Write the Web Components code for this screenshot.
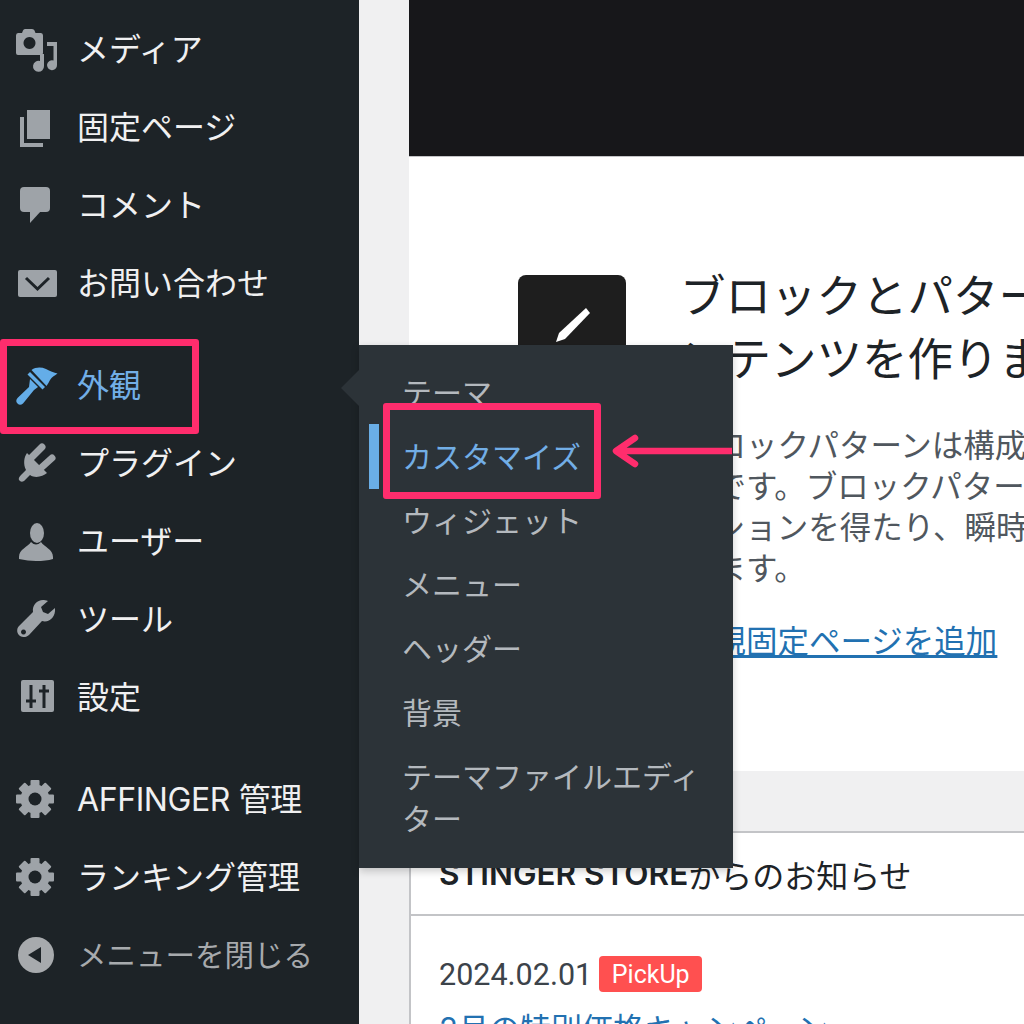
<!DOCTYPE html>
<html lang="ja">
<head>
<meta charset="utf-8">
<title>外観 カスタマイズ</title>
<style>
html, body { margin: 0; height: 1024px; overflow: hidden; }
body {
    display: flex;
    position: relative;
    background: #f0f0f1;
    font-family: Inter, "Noto Sans CJK JP", sans-serif;
    color: #3c434a;
}
</style>
</head>
<body>
<admin-sidebar>
    <menu-item icon="media">メディア</menu-item>
    <menu-item icon="pages">固定ページ</menu-item>
    <menu-item icon="comment">コメント</menu-item>
    <menu-item icon="mail">お問い合わせ</menu-item>
    <menu-gap></menu-gap>
    <menu-item icon="brush" active>外観</menu-item>
    <menu-item icon="plug">プラグイン</menu-item>
    <menu-item icon="user">ユーザー</menu-item>
    <menu-item icon="wrench">ツール</menu-item>
    <menu-item icon="sliders">設定</menu-item>
    <menu-gap></menu-gap>
    <menu-item icon="gear" style="letter-spacing:-.4px">AFFINGER 管理</menu-item>
    <menu-item icon="gear">ランキング管理</menu-item>
    <menu-item icon="collapse" dim>メニューを閉じる</menu-item>
</admin-sidebar>

<main-area>
    <video-banner></video-banner>
    <welcome-panel></welcome-panel>
    <news-box></news-box>
</main-area>

<fly-menu>
    <fly-item>テーマ</fly-item>
    <fly-item current>カスタマイズ</fly-item>
    <fly-item>ウィジェット</fly-item>
    <fly-item>メニュー</fly-item>
    <fly-item>ヘッダー</fly-item>
    <fly-item>背景</fly-item>
    <fly-item>テーマファイルエディター</fly-item>
</fly-menu>

<mark-box style="left:0;top:339px;width:199px;height:95px"></mark-box>
<mark-box style="left:383px;top:403px;width:218px;height:96px"></mark-box>
<mark-arrow></mark-arrow>

<script>
// dashicon look-alikes, drawn in a 40x40 box
var BG = "#1d2327";
var ICONS = {
    media: `<path fill-rule="evenodd" d="M0 6.5Q0 4 2 4H6L7 1.5Q7.500 0 9 0H16Q18 0 18.500 1.500L19.500 4H25Q27 4 27 6.500V24Q27 26 25 26H2Q0 26 0 24ZM13.500 8A6 6 0 1 0 13.501 8Z"/>
            <path d="M31 13H41V36A5 5 0 1 1 37.500 31.500V17H31Z"/><path d="M24 25H28V37A5.500 5.500 0 1 1 24 32Z"/>`,
    pages: `<path d="M11 3H34V32H11Z"/><path d="M4 10H8V36H27V40H4Z"/>`,
    comment: `<rect x="4" y="2" width="30" height="25" rx="4"/><path d="M14 26V38L25 26Z"/>`,
    mail: `<rect x="2" y="7" width="39" height="27" rx="2"/><path d="M10 15L21.500 26L33 15" fill="none" stroke="${BG}" stroke-width="3"/>`,
    brush: `<path d="M15.500 5C20 2 25 2 30 4C34 6 38 8 41.500 8.500C38 11 36 12 34 15C33 17 32 19 30.500 21Z"/>
            <path d="M11.500 9.500L14 7L29 22L26.500 24.500Z"/>
            <path d="M14 14L22 22L18 25L7 38.500Q4 41 1.500 38.500Q-1 36 1.500 33L13 22Z"/>`,
    plug: `<path d="M11 10L31 30C27 33 20 36 14 32L8 38Q5 40 3 37Q2 35 5 32L10 27C7 21 8 14 11 10Z"/>
           <path d="M16 14L26 4M26 24L36 15" stroke="currentColor" stroke-width="7" stroke-linecap="round"/>`,
    user: `<ellipse cx="21" cy="12" rx="7" ry="10"/><path d="M15 21C12 26 3 28 3 36V38Q12 40 20 40Q30 40 37 38V36C37 28 28 26 25 21Q20 26 15 21Z"/>`,
    wrench: `<path fill-rule="evenodd" d="M27 1C21 1 16 6 17 13L3 27C0 30 1 35 4 37C7 39 11 38 13 36L26 22C33 24 40 18 39 9L32 15L27 13L25 8L32 2C30 1 28 1 27 1ZM7.500 30.500A2.500 2.500 0 1 0 7.501 30.500Z"/>`,
    sliders: `<rect x="5" y="3" width="33" height="32" rx="2"/>
              <path d="M15 8V31M10 24H20M28 8V31M23 14H33" fill="none" stroke="${BG}" stroke-width="3"/>`,
    gear: `<g transform="translate(19 20)"><circle r="14.500"/>
           <rect x="-4.500" y="-19" width="9" height="38" rx="1"/>
           <rect x="-4.500" y="-19" width="9" height="38" rx="1" transform="rotate(45)"/>
           <rect x="-4.500" y="-19" width="9" height="38" rx="1" transform="rotate(90)"/>
           <rect x="-4.500" y="-19" width="9" height="38" rx="1" transform="rotate(135)"/>
           <circle r="6.500" fill="${BG}"/></g>`,
    collapse: `<circle cx="20" cy="20" r="18"/><path d="M12 20L25 12V28Z" fill="${BG}"/>`
};

class AdminSidebar extends HTMLElement {
    constructor(){
        super();
        this.attachShadow({mode:"open"});
        this.shadowRoot.innerHTML = `
        <style>
        :host{
            display: flex;
            flex-direction: column;
            flex: none;
            width: 359px;
            height: 1024px;
            box-sizing: border-box;
            padding-top: 10px;
            background: ${BG};
        }
        </style>
        <slot></slot>`;
    }
}

class MenuItem extends HTMLElement {
    constructor(){
        super();
        this.attachShadow({mode:"open"});
    }
    connectedCallback(){
        this.shadowRoot.innerHTML = `
        <style>
        :host{
            display: flex;
            align-items: center;
            gap: 21px;
            height: 78px;
            padding-left: 16px;
            font-size: 32px;
            color: #f0f0f1;
            white-space: nowrap;
        }
        :host([active]){ color: #72aee6; }
        :host([dim]){ color: #a7aaad; font-size: 29.500px; }
        span{ margin-bottom: 4px; }
        svg{ flex: none; width: 40px; height: 40px; overflow: visible; color: #9ea3a8; fill: currentColor; }
        :host([active]) svg{ color: #64ade8; }
        :host([dim]) svg{ color: #a7aaad; }
        </style>
        <svg viewBox="0 0 40 40">${ICONS[this.getAttribute("icon")]}</svg>
        <span><slot></slot></span>`;
    }
}

class MenuGap extends HTMLElement {
    constructor(){
        super();
        this.attachShadow({mode:"open"});
        this.shadowRoot.innerHTML = `<style>:host{ display:block; height:24px; }</style>`;
    }
}

class MainArea extends HTMLElement {
    constructor(){
        super();
        this.attachShadow({mode:"open"});
        this.shadowRoot.innerHTML = `
        <style>
        :host{
            display: flex;
            flex-direction: column;
            flex: 1;
            min-width: 0;
            padding-left: 50px;
        }
        </style>
        <slot></slot>`;
    }
}

class VideoBanner extends HTMLElement {
    constructor(){
        super();
        this.attachShadow({mode:"open"});
        this.shadowRoot.innerHTML = `
        <style>
        :host{
            display: block;
            flex: none;
            height: 156px;
            background: #17171a;
            border-bottom: 1px solid #c3c4c7;
        }
        </style>`;
    }
}

class WelcomePanel extends HTMLElement {
    constructor(){
        super();
        this.attachShadow({mode:"open"});
        this.shadowRoot.innerHTML = `
        <style>
        :host{
            display: flex;
            flex: none;
            gap: 57px;
            height: 614px;
            box-sizing: border-box;
            padding: 108px 0 0 109px;
            background: #fff;
            overflow: hidden;
        }
        .tile{
            flex: none;
            width: 108px;
            height: 108px;
            margin-top: 10px;
            border-radius: 8px;
            background: #1e1e1e;
        }
        .tile svg{ display: block; }
        .text{ flex: none; width: 640px; }
        h3{
            margin: 0 0 34px -3px;
            font-size: 45.500px;
            font-weight: 400;
            line-height: 63px;
            color: #1d2327;
            white-space: nowrap;
        }
        p{
            margin: 0;
            font-size: 31.500px;
            line-height: 41px;
            color: #50575e;
            white-space: nowrap;
        }
        a{
            display: block;
            margin-top: 32px;
            font-size: 31.500px;
            line-height: 41px;
            color: #2271b1;
            text-decoration: underline;
        }
        </style>
        <div class="tile">
            <svg width="108" height="108" viewBox="0 0 108 108"><path fill="#fff" d="M68 33L72 38L47 64L38 67L41 58Z"/></svg>
        </div>
        <div class="text">
            <h3>ブロックとパターンでコ<br>ンテンツを作りましょう</h3>
            <p>ブロックパターンは構成済みのブ<br>トです。ブロックパターンを使って<br>ーションを得たり、瞬時に新しい<br>きます。</p>
            <a href="#">新規固定ページを追加</a>
        </div>`;
    }
}

class NewsBox extends HTMLElement {
    constructor(){
        super();
        this.attachShadow({mode:"open"});
        this.shadowRoot.innerHTML = `
        <style>
        :host{
            display: block;
            flex: none;
            margin-top: 60px;
            background: #fff;
            border: 2px solid #c3c4c7;
            border-right: 0;
            border-bottom: 0;
        }
        .head{
            height: 83px;
            box-sizing: border-box;
            padding: 0 0 0 28px;
            display: flex;
            align-items: center;
            font-size: 32px;
            color: #1d2327;
            border-bottom: 2px solid #c3c4c7;
            white-space: nowrap;
        }
        .head b{ font-weight: 600; font-size: 31.500px; }
        .body{ padding: 40px 0 0 28px; }
        .meta{ display: flex; align-items: center; gap: 7px; }
        .date{ font-family: Roboto, sans-serif; font-size: 30.500px; color: #3c434a; }
        .badge{
            height: 36px;
            width: 103px;
            display: flex;
            align-items: center;
            justify-content: center;
            border-radius: 4px;
            background: #ff5050;
            color: #fff;
            font-family: Roboto, sans-serif;
            font-size: 25px;
        }
        a{
            display: block;
            margin-top: 16px;
            font-size: 31px;
            line-height: 41px;
            color: #2271b1;
            text-decoration: underline;
            white-space: nowrap;
        }
        </style>
        <div class="head"><b>STINGER STORE</b>からのお知らせ</div>
        <div class="body">
            <div class="meta"><span class="date">2024.02.01</span><span class="badge">PickUp</span></div>
            <a href="#">2月の特別価格キャンペーン</a>
        </div>`;
    }
}

class FlyMenu extends HTMLElement {
    constructor(){
        super();
        this.attachShadow({mode:"open"});
        this.shadowRoot.innerHTML = `
        <style>
        :host{
            position: absolute;
            left: 359px;
            top: 345px;
            width: 374px;
            height: 523px;
            box-sizing: border-box;
            padding: 16px 24px 0 32px;
            background: #2c3338;
            box-shadow: 0 3px 8px rgba(0,0,0,.2);
        }
        .tip{
            position: absolute;
            left: -18px;
            top: 25px;
            width: 0;
            height: 0;
            border: solid transparent;
            border-width: 18px 18px 18px 0;
            border-right-color: #2c3338;
        }
        </style>
        <div class="tip"></div>
        <slot></slot>`;
    }
}

class FlyItem extends HTMLElement {
    constructor(){
        super();
        this.attachShadow({mode:"open"});
        this.shadowRoot.innerHTML = `
        <style>
        :host{
            display: block;
            position: relative;
            padding: 11px 0 11px 11px;
            font-size: 30px;
            line-height: 42px;
            color: #b4b9be;
        }
        :host([current]){ color: #72aee6; }
        :host([current])::before{
            content: "";
            position: absolute;
            left: -22px;
            top: -1px;
            width: 10px;
            height: 65px;
            background: #6aaee6;
        }
        </style>
        <slot></slot>`;
    }
}

class MarkBox extends HTMLElement {
    constructor(){
        super();
        this.attachShadow({mode:"open"});
        this.shadowRoot.innerHTML = `
        <style>
        :host{
            position: absolute;
            box-sizing: border-box;
            border: 7px solid #ff2d6d;
            border-radius: 3px;
        }
        </style>`;
    }
}

class MarkArrow extends HTMLElement {
    constructor(){
        super();
        this.attachShadow({mode:"open"});
        this.shadowRoot.innerHTML = `
        <style>
        :host{ position: absolute; left: 610px; top: 432px; width: 122px; height: 38px; }
        svg{ display: block; }
        </style>
        <svg width="122" height="38" viewBox="0 0 122 38">
            <path d="M122 19H7M25 6L6 19L25 32" fill="none" stroke="#ff2d6d" stroke-width="6.500" stroke-linecap="round" stroke-linejoin="round"/>
        </svg>`;
    }
}

customElements.define("admin-sidebar", AdminSidebar);
customElements.define("menu-item", MenuItem);
customElements.define("menu-gap", MenuGap);
customElements.define("main-area", MainArea);
customElements.define("video-banner", VideoBanner);
customElements.define("welcome-panel", WelcomePanel);
customElements.define("news-box", NewsBox);
customElements.define("fly-menu", FlyMenu);
customElements.define("fly-item", FlyItem);
customElements.define("mark-box", MarkBox);
customElements.define("mark-arrow", MarkArrow);
</script>
</body>
</html>
